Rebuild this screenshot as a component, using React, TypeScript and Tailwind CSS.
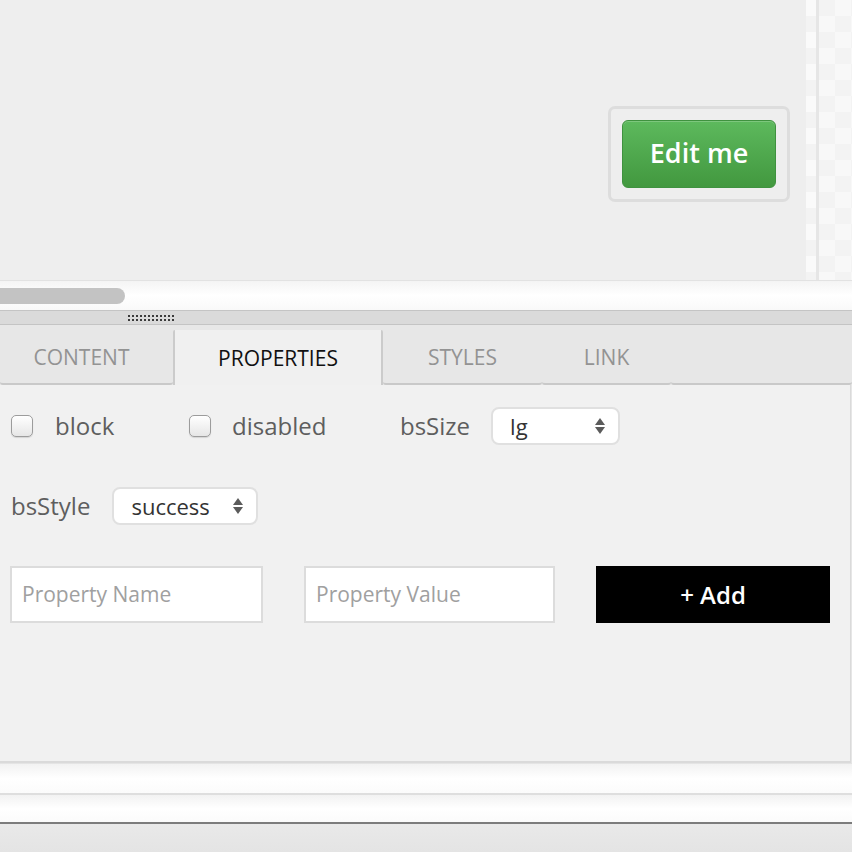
const FONT = "font-['Open_Sans',sans-serif]";

function Checkbox() {
  return (
    <span className="block h-[22px] w-[22px] shrink-0 rounded-[5px] border border-[#9c9c9c] bg-gradient-to-b from-white to-[#e6e6e6] shadow-[0_1px_1px_rgba(0,0,0,0.12)]" />
  );
}

function SelectArrows() {
  return (
    <svg width="12" height="18" viewBox="0 0 12 18" className="shrink-0">
      <path d="M6 1 L11 8 L1 8 Z" fill="#5b5b5b" />
      <path d="M1 10 L11 10 L6 17 Z" fill="#5b5b5b" />
    </svg>
  );
}

function Select({ value, width }: { value: string; width: string }) {
  return (
    <div
      className={`flex h-[38px] ${width} items-center justify-between rounded-[8px] border-2 border-[#e0e0e0] bg-white pl-[17px] pr-[12px] text-[22px] text-[#333]`}
    >
      <span className="leading-none">{value}</span>
      <SelectArrows />
    </div>
  );
}

function Grip() {
  const dots = [];
  for (let r = 0; r < 2; r++) {
    for (let c = 0; c < 12; c++) {
      dots.push(<rect key={`${r}-${c}`} x={c * 4} y={r * 4} width="2" height="2" fill="#3a3a3a" />);
    }
  }
  return (
    <svg width="47" height="6" viewBox="0 0 47 6">
      {dots}
    </svg>
  );
}

function Tab({ label, width, active, extra = '' }: { label: string; width: string; active?: boolean; extra?: string }) {
  if (active) {
    return (
      <div
        className={`mt-[5px] flex ${width} items-center justify-center rounded-t-[2px] border-x-2 border-[#cbcbcb] bg-[#f0f0f0] pt-[3px] text-[21px] text-[#111]`}
      >
        {label}
      </div>
    );
  }
  return (
    <div
      className={`flex ${width} items-center justify-center rounded-b-[3px] border-b-2 border-[#c9c9c9] pt-[8px] text-[21px] text-[#939393] ${extra}`}
    >
      {label}
    </div>
  );
}

export default function App() {
  return (
    <div className={`flex h-[852px] w-[852px] flex-col overflow-hidden bg-[#e6e6e6] ${FONT}`}>
      {/* canvas */}
      <div className="flex h-[280px] shrink-0">
        <div className="flex flex-1 items-start justify-end bg-[#eeeeee] pr-[16px] pt-[106px]">
          <div className="rounded-[7px] border-[3px] border-[#dddddd] p-[11px]">
            <button className="flex h-[68px] w-[154px] items-center justify-center rounded-[6px] border border-[#3f923f] bg-gradient-to-b from-[#5db95d] to-[#42983f] pb-[2px] text-[27px] font-semibold text-white shadow-[inset_0_1px_0_rgba(255,255,255,0.2)]">
              Edit me
            </button>
          </div>
        </div>
        <div className="flex w-[46px]">
          <div className="w-[10px] bg-[#eeeeee] bg-[conic-gradient(#f3f3f3_25%,#fafafa_0_50%,#f3f3f3_0_75%,#fafafa_0)] bg-[length:32px_32px]" />
          <div className="w-[3px] bg-[#e6e6e6]" />
          <div className="flex-1 bg-[conic-gradient(#f8f8f8_25%,#f3f3f3_0_50%,#f8f8f8_0_75%,#f3f3f3_0)] bg-[length:32px_32px]" />
        </div>
      </div>

      {/* horizontal scrollbar */}
      <div className="flex h-[30px] shrink-0 items-center border-t border-[#e2e2e2] bg-gradient-to-b from-[#f4f4f4] via-white to-[#f9f9f9]">
        <div className="h-[16px] w-[125px] rounded-r-full bg-[#c3c3c3]" />
      </div>

      {/* splitter */}
      <div className="flex h-[15px] shrink-0 items-center border-y border-[#c4c4c4] bg-[#dadada] pl-[128px]">
        <Grip />
      </div>

      {/* tabs */}
      <div className="flex h-[60px] shrink-0 bg-[#e7e7e7]">
        <Tab label="CONTENT" width="w-[173px]" extra="pr-[10px]" />
        <Tab label="PROPERTIES" width="w-[210px]" active />
        <Tab label="STYLES" width="w-[159px]" />
        <Tab label="LINK" width="w-[129px]" />
        <div className="flex-1 rounded-b-[3px] border-b-2 border-[#c9c9c9]" />
      </div>

      {/* properties panel */}
      <div className="mr-[1px] flex h-[378px] shrink-0 flex-col border-r border-b-2 border-[#dadada] bg-[#f1f1f1] pl-[11px] pt-[22px] text-[24px] text-[#5e5e5e]">
        <div className="flex h-[38px] items-center">
          <div className="flex w-[178px] items-center gap-[22px]">
            <Checkbox />
            <span>block</span>
          </div>
          <div className="flex w-[211px] items-center gap-[21px]">
            <Checkbox />
            <span>disabled</span>
          </div>
          <div className="flex items-center gap-[21px]">
            <span>bsSize</span>
            <Select value="lg" width="w-[129px]" />
          </div>
        </div>

        <div className="mt-[42px] flex h-[38px] items-center gap-[22px]">
          <span>bsStyle</span>
          <Select value="success" width="w-[146px]" />
        </div>

        <div className="mt-[41px] -ml-[1px] flex items-center gap-[41px]">
          <div className="flex h-[57px] w-[253px] items-center border-2 border-[#dcdcdc] bg-white pl-[10px] text-[21px] text-[#a0a0a0]">
            Property Name
          </div>
          <div className="flex h-[57px] w-[251px] items-center border-2 border-[#dcdcdc] bg-white pl-[10px] text-[21px] text-[#a0a0a0]">
            Property Value
          </div>
          <button className="flex h-[57px] w-[234px] items-center justify-center bg-black text-[24px] font-semibold text-white">
            + Add
          </button>
        </div>
      </div>

      {/* lower bars */}
      <div className="h-[30px] shrink-0 border-t border-[#e4e4e4] bg-gradient-to-b from-[#f2f2f2] via-white to-[#fbfbfb]" />
      <div className="h-[29px] shrink-0 border-t-2 border-[#dedede] bg-gradient-to-b from-[#f2f2f2] via-white to-[#fbfbfb]" />
      <div className="h-[2px] shrink-0 bg-[#7c7c7c]" />
      <div className="flex-1 bg-gradient-to-b from-[#e9e9e9] to-[#e4e4e4]" />
    </div>
  );
}
